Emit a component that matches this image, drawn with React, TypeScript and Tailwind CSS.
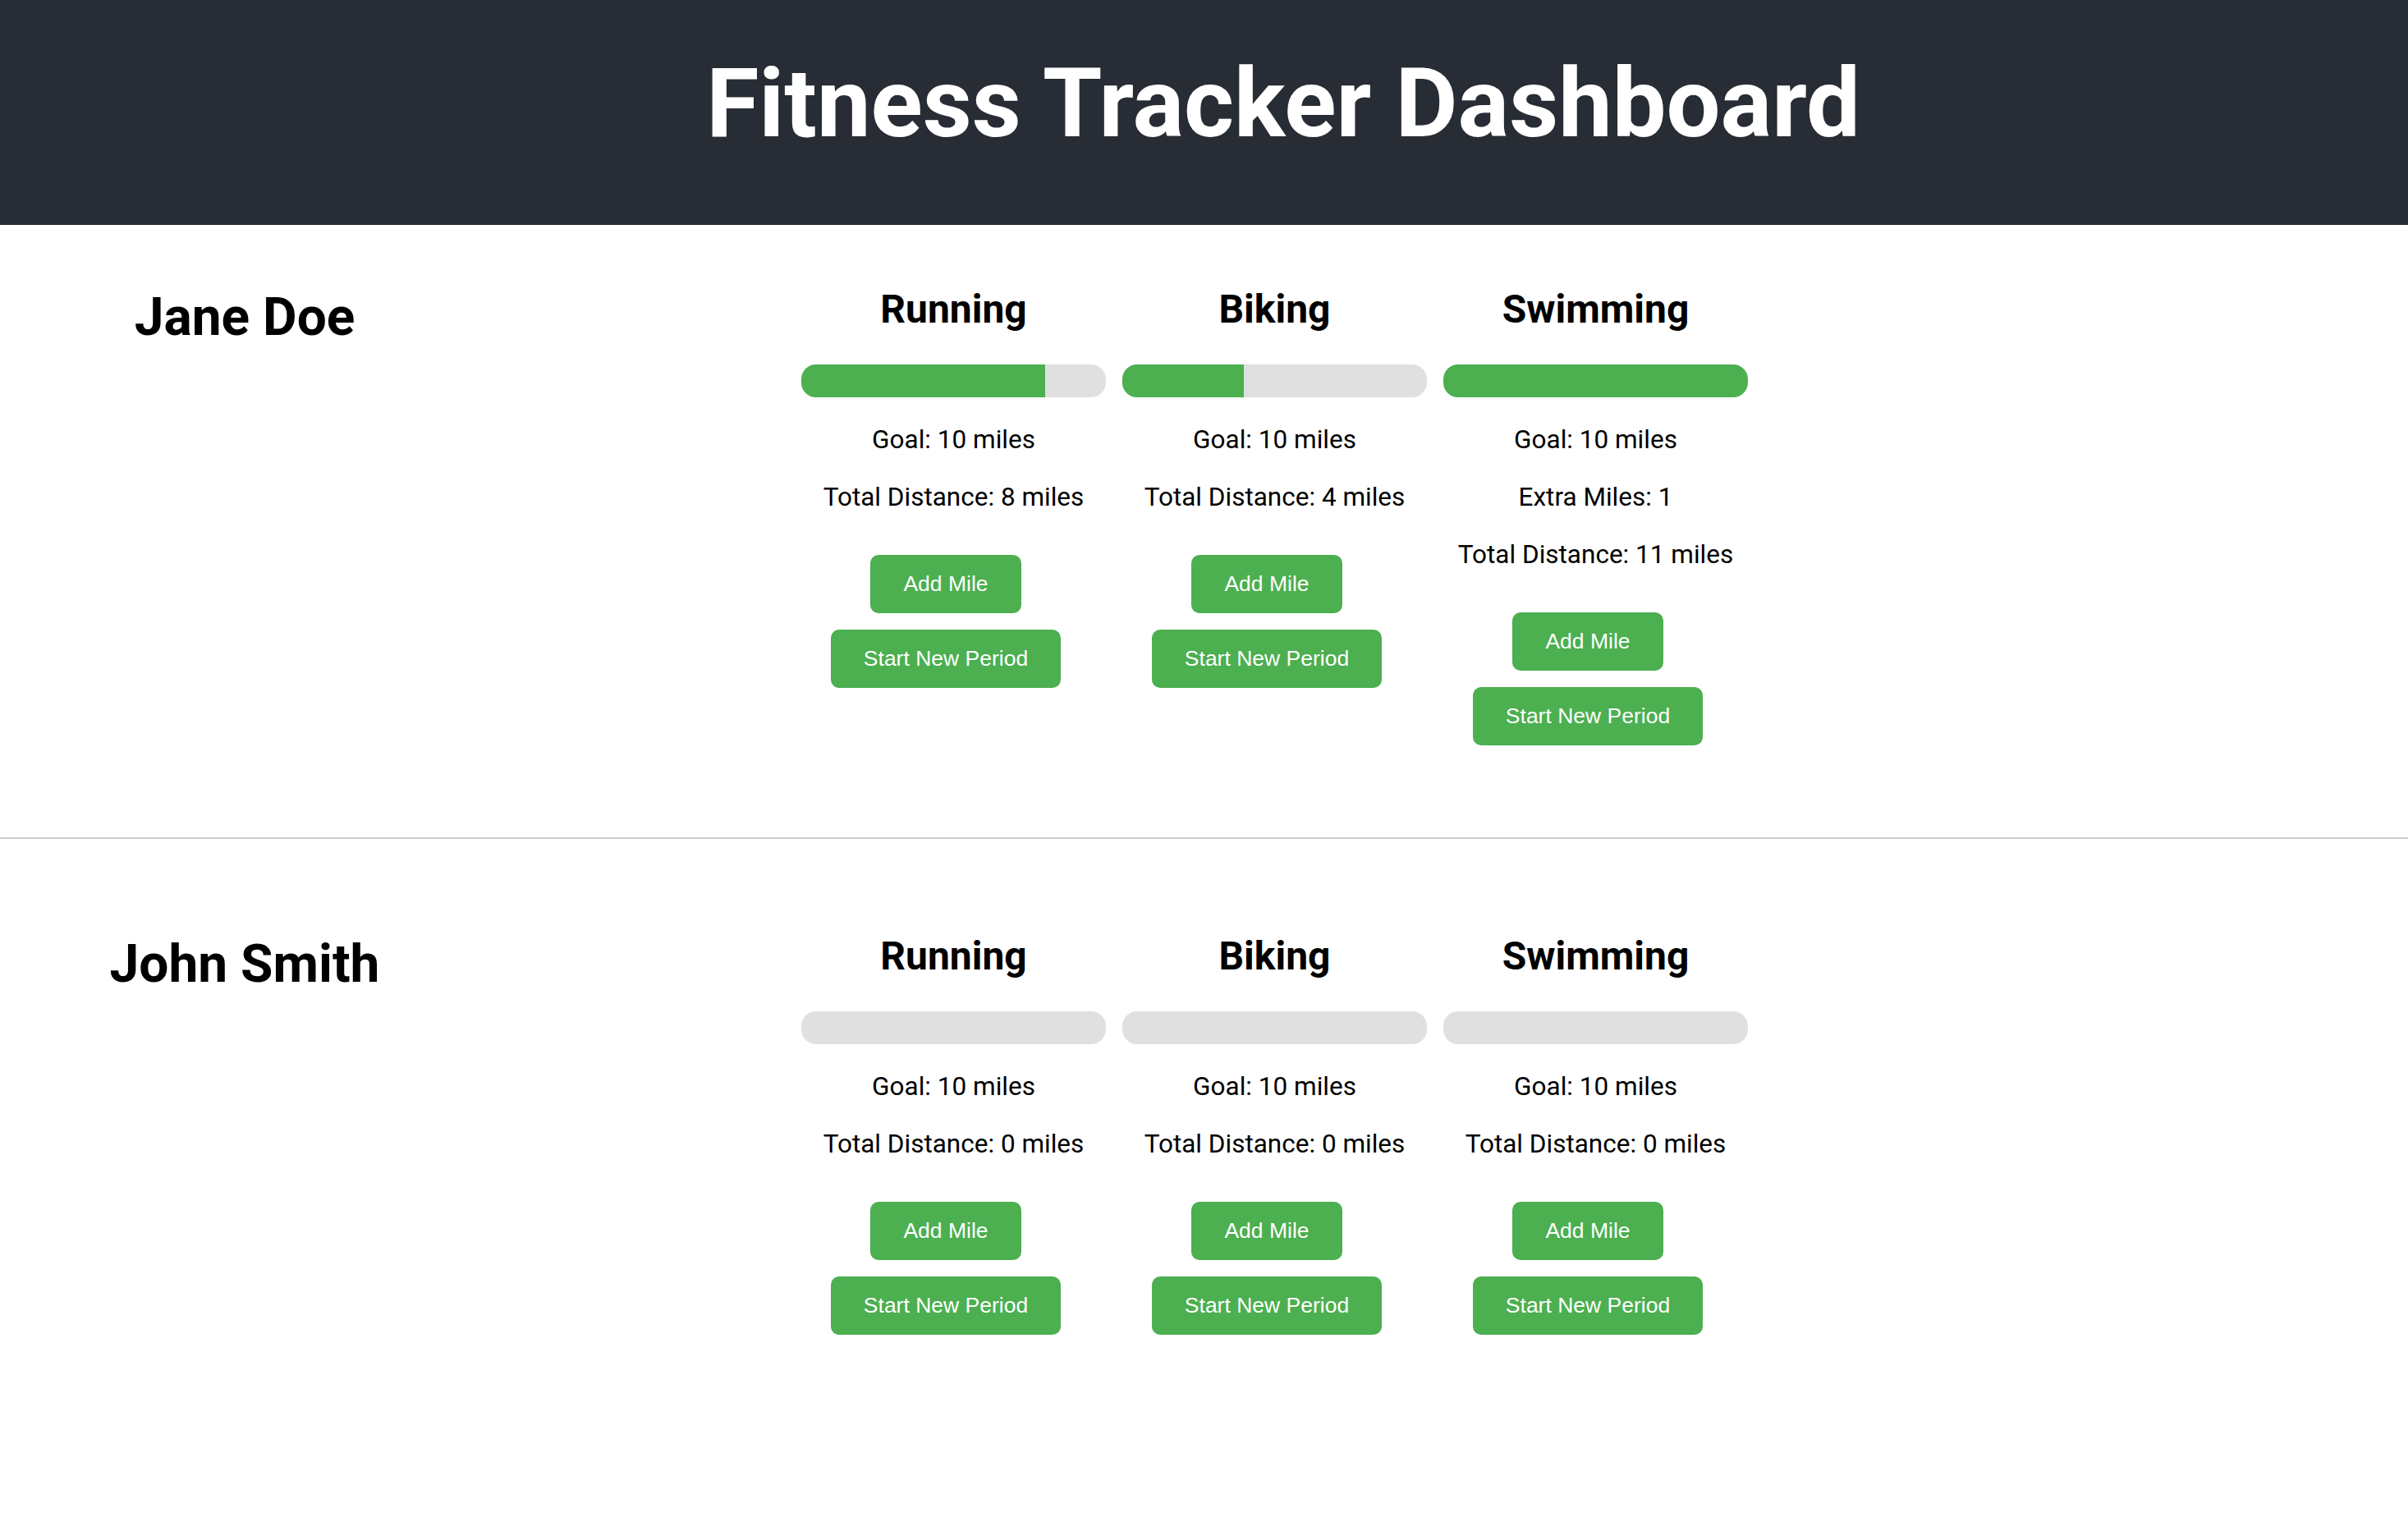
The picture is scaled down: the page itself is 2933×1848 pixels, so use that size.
import React from 'react';

interface Activity {
  name: string;
  goal: number;
  total: number;
}

interface User {
  name: string;
  activities: Activity[];
}

const users: User[] = [
  {
    name: 'Jane Doe',
    activities: [
      { name: 'Running', goal: 10, total: 8 },
      { name: 'Biking', goal: 10, total: 4 },
      { name: 'Swimming', goal: 10, total: 11 },
    ],
  },
  {
    name: 'John Smith',
    activities: [
      { name: 'Running', goal: 10, total: 0 },
      { name: 'Biking', goal: 10, total: 0 },
      { name: 'Swimming', goal: 10, total: 0 },
    ],
  },
];

const ActivityCard = ({ activity }: { activity: Activity }) => {
  const pct = Math.min(100, (activity.total / activity.goal) * 100);
  const extra = activity.total - activity.goal;

  return (
    <div className="w-[371px] flex flex-col items-center text-center">
      <h3 className="text-[48px] leading-[55px] font-bold">{activity.name}</h3>
      <div className="mt-[40px] h-[40px] w-full rounded-[18px] bg-[#e0e0e0] overflow-hidden">
        <div className="h-full bg-[#4caf50]" style={{ width: `${pct}%` }} />
      </div>
      <div className="mt-[34px] flex flex-col gap-[35px] text-[31.5px] leading-[35px]">
        <p>Goal: {activity.goal} miles</p>
        {extra > 0 && <p>Extra Miles: {extra}</p>}
        <p>Total Distance: {activity.total} miles</p>
      </div>
      <div className="mt-[53px] pr-[19px] flex flex-col items-center gap-[20px] font-['Liberation_Sans',Arial,sans-serif]">
        <button className="bg-[#4caf50] text-white text-[26.5px] leading-[31px] px-[40px] py-[20px] rounded-[10px]">
          Add Mile
        </button>
        <button className="bg-[#4caf50] text-white text-[26.5px] leading-[31px] px-[40px] py-[20px] rounded-[10px]">
          Start New Period
        </button>
      </div>
    </div>
  );
};

export default function App() {
  return (
    <div className="min-h-screen bg-white text-black font-['Roboto','Liberation_Sans',sans-serif]">
      <header className="h-[274px] bg-[#282c34] flex justify-center pl-[193px] pt-[58px]">
        <h1 className="text-[117px] leading-[137px] font-bold text-white">Fitness Tracker Dashboard</h1>
      </header>

      <main className="pt-[75px]">
        {users.map((user, i) => (
          <section
            key={user.name}
            className={
              i < users.length - 1
                ? 'flex items-start pb-[112px] border-b-2 border-[#cccccc]'
                : 'flex items-start mt-[115px] pb-[112px]'
            }
          >
            <h2 className="w-[596px] text-center text-[64px] leading-[75px] font-bold">{user.name}</h2>
            <div className="ml-[380px] flex items-start gap-[20px]">
              {user.activities.map((a) => (
                <ActivityCard key={a.name} activity={a} />
              ))}
            </div>
          </section>
        ))}
      </main>
    </div>
  );
}
